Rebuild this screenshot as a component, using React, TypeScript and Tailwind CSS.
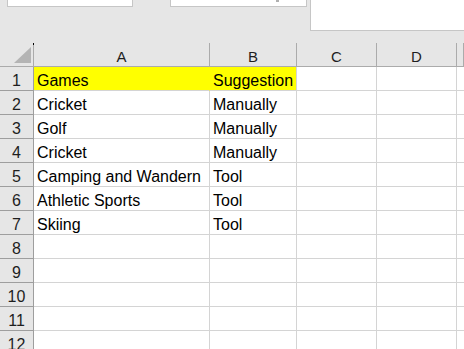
import React from "react";

const cols = ["A", "B", "C", "D", ""];
const data: [string, string][] = [
  ["Games", "Suggestion"],
  ["Cricket", "Manually"],
  ["Golf", "Manually"],
  ["Cricket", "Manually"],
  ["Camping and Wandern", "Tool"],
  ["Athletic Sports", "Tool"],
  ["Skiing", "Tool"],
  ["", ""],
  ["", ""],
  ["", ""],
  ["", ""],
  ["", ""],
];

export default function App() {
  return (
    <div
      className="w-[464px] h-[349px] overflow-hidden bg-white text-black"
      style={{ fontFamily: '"Liberation Sans", Arial, sans-serif' }}
    >
      {/* top ribbon area */}
      <div className="h-[43px] bg-[#e6e6e6] flex items-start">
        <div className="ml-[7px] w-[126px] h-[7px] bg-white border-l border-r border-b border-[#c6c6c6]" />
        <div className="relative ml-[37px] w-[137px] h-[7px] bg-white border-l border-r border-b border-[#c6c6c6]">
          <div className="absolute left-[105px] top-0 w-[3px] h-[2px] bg-[#b0b0b0]" />
        </div>
        <div className="ml-[3px] flex-1 h-[31px] bg-white border-l border-b border-[#c6c6c6]" />
      </div>
      {/* sheet */}
      <div className="grid grid-cols-[34px_176px_87px_80px_80px_1fr] auto-rows-[24px]">
        {/* header row */}
        <div className="relative bg-[#e6e6e6] border-r border-b border-[#ababab] flex items-center justify-center">
          <div className="absolute right-[-1px] top-0 w-[1px] h-[2px] bg-black" />
          <svg width="34" height="24" className="absolute left-0 top-0">
            <polygon points="14,20 31,20 31,4" fill="#b4b4b4" />
          </svg>
        </div>
        {cols.map((c, i) => (
          <div
            key={"h" + i}
            className="bg-[#e6e6e6] border-r border-b border-[#ababab] flex items-end justify-center pb-[2px] text-[15px] leading-none text-[#1e1e1e]"
          >
            {c}
          </div>
        ))}
        {data.map((row, r) => {
          const yellow = r === 0;
          return (
            <React.Fragment key={"r" + r}>
              <div className="bg-[#e6e6e6] border-r border-b border-[#9e9e9e] flex items-end justify-center pb-[1px] text-[16px] leading-none text-[#1e1e1e]">
                {r + 1}
              </div>
              <div
                className={
                  "border-r border-b flex items-end pl-[3px] pb-[1px] text-[16px] leading-none whitespace-nowrap " +
                  (yellow ? "bg-[#ffff00] border-r-[#ffff00] border-b-[#d4d4d4]" : "border-[#d4d4d4]")
                }
              >
                {row[0]}
              </div>
              <div
                className={
                  "border-r border-b flex items-end pl-[3px] pb-[1px] text-[16px] leading-none whitespace-nowrap " +
                  (yellow ? "bg-[#ffff00] border-[#d4d4d4]" : "border-[#d4d4d4]")
                }
              >
                {row[1]}
              </div>
              <div className="border-r border-b border-[#d4d4d4]" />
              <div className="border-r border-b border-[#d4d4d4]" />
              <div className="border-b border-[#d4d4d4]" />
            </React.Fragment>
          );
        })}
      </div>
    </div>
  );
}
